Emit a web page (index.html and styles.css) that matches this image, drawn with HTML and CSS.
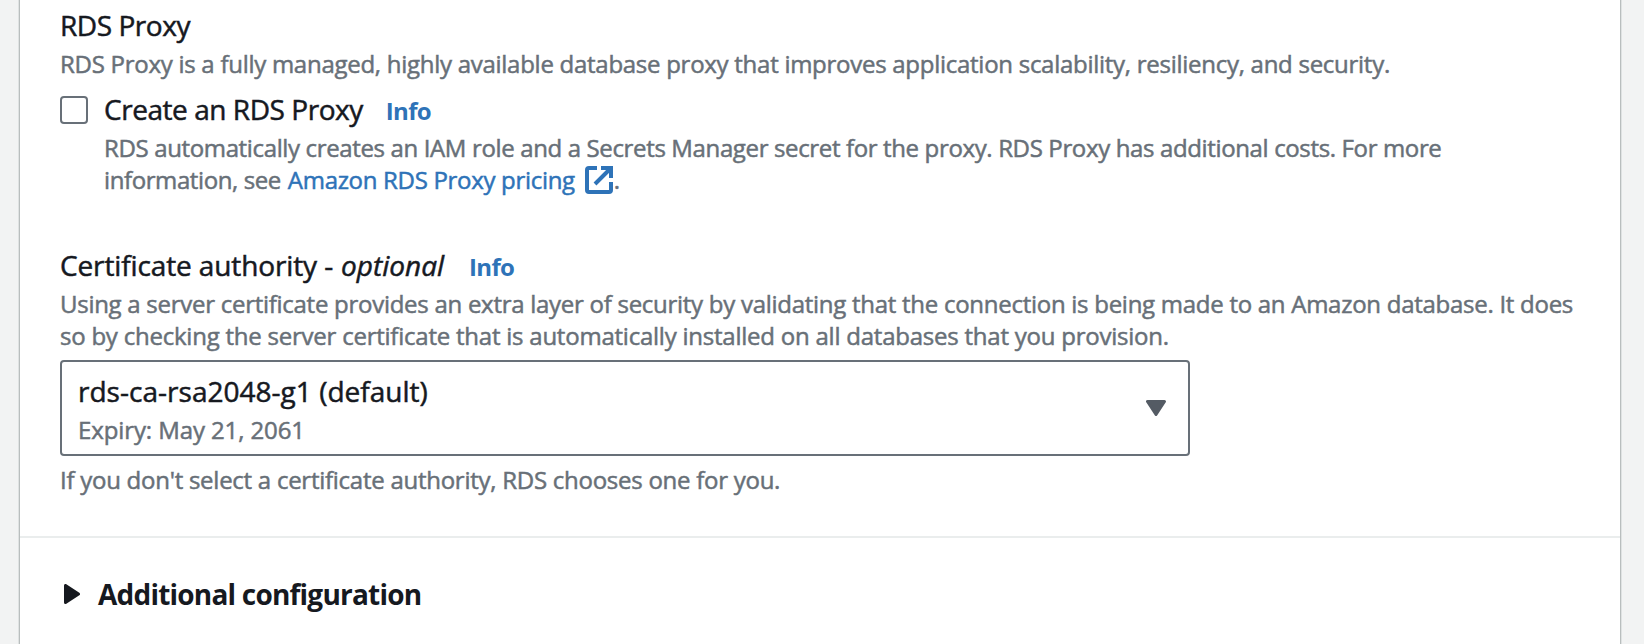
FILE: index.html
```
<!DOCTYPE html>
<html lang="en">
<head>
<meta charset="utf-8">
<title>RDS Proxy</title>
<link rel="stylesheet" href="styles.css">
</head>
<body>
<main class="card">
  <section class="settings">
    <div class="field">
      <h2 class="label label-proxy">RDS Proxy</h2>
      <p class="hint hint-proxy">RDS Proxy is a fully managed, highly available database proxy that improves application scalability, resiliency, and security.</p>
      <div class="check-row">
        <span class="checkbox" role="checkbox" aria-checked="false"></span>
        <div class="check-body">
          <div class="label-row"><span class="label label-create">Create an RDS Proxy</span><a class="info">Info</a></div>
          <p class="hint hint-role">RDS automatically creates an IAM role and a Secrets Manager secret for the proxy. RDS Proxy has additional costs. For more</p>
          <p class="hint hint-link"><span class="hint-see">information, see</span><a class="link">Amazon RDS Proxy pricing</a><svg class="external" viewBox="0 0 28 28" width="28" height="28"><path d="M12 2H4Q2 2 2 4V24Q2 26 4 26H24Q26 26 26 24V16M16 2H26V12M25 3L10 18" fill="none" stroke="currentColor" stroke-width="4"/></svg><span>.</span></p>
        </div>
      </div>
    </div>
    <div class="field field-ca">
      <div class="label-row"><h2 class="label label-ca">Certificate authority -</h2><em class="label optional">optional</em><a class="info info-ca">Info</a></div>
      <p class="hint hint-using">Using a server certificate provides an extra layer of security by validating that the connection is being made to an Amazon database. It does</p>
      <p class="hint hint-so">so by checking the server certificate that is automatically installed on all databases that you provision.</p>
      <div class="select">
        <div class="select-text">
          <div class="label option">rds-ca-rsa2048-g1 (default)</div>
          <div class="hint expiry">Expiry: May 21, 2061</div>
        </div>
        <svg class="caret" viewBox="0 0 20 16" width="20" height="16"><path d="M1.5 1.5H18.5L10 14.5Z" fill="currentColor" stroke="currentColor" stroke-width="3" stroke-linejoin="round"/></svg>
      </div>
      <p class="hint hint-none">If you don't select a certificate authority, RDS chooses one for you.</p>
    </div>
  </section>
  <section class="expander">
    <svg viewBox="0 0 16 20" width="16" height="20"><path d="M1.5 1.5V18.5L14.5 10Z" fill="currentColor" stroke="currentColor" stroke-width="3" stroke-linejoin="round"/></svg>
    <h2 class="label expander-title">Additional configuration</h2>
  </section>
</main>
</body>
</html>
```
FILE: styles.css
```
* { box-sizing: border-box; }
body {
  margin: 0;
  height: 644px;
  overflow: hidden;
  padding: 0 24px 0 20px;
  background: #f2f3f3;
  font-family: "Open Sans", "Noto Sans", sans-serif;
  font-weight: 500;
  color: #16191f;
}
h2, p { margin: 0; }
.card {
  height: 644px;
  background: #fff;
  box-shadow: 0 0 0 1px #b9bebe, 0 0 0 2px #dfe2e2;
}
.settings {
  height: 538px;
  padding: 3px 40px 0;
  border-bottom: 2px solid #eaeded;
}
.label {
  font-size: 28px;
  line-height: 44px;
  font-weight: 500;
  white-space: nowrap;
  -webkit-text-stroke: 0.5px currentColor;
}
.label-row { display: flex; height: 44px; }
.hint {
  font-size: 24px;
  line-height: 32px;
  color: #687078;
  white-space: nowrap;
  -webkit-text-stroke: 0.5px currentColor;
}
.label + .hint, .label-row + .hint { margin-top: 1px; }
.check-row { display: flex; gap: 16px; margin-top: 7px; }
.checkbox {
  width: 28px;
  height: 28px;
  margin-top: 9px;
  border: 2px solid #687078;
  border-radius: 4px;
}
.info {
  margin-left: 23px;
  padding-top: 3px;
  font-size: 24px;
  line-height: 42px;
  font-weight: 700;
  color: #2e73b8;
  letter-spacing: -0.7px;
}
.info-ca { margin-left: 25px; }
.hint-link { display: flex; }
.link {
  margin-left: 7px;
  color: #2e73b8;
  letter-spacing: -0.31px;
  -webkit-text-stroke: 0.5px #2e73b8;
}
.external { margin: 2px 1px 0 10px; color: #2e73b8; }
.field-ca { margin-top: 47px; }
.optional { margin-left: 8px; font-style: italic; }
.select {
  display: flex;
  align-items: center;
  justify-content: space-between;
  width: 1130px;
  height: 96px;
  margin: 8px 0;
  padding: 0 22px 0 16px;
  border: 2px solid #687078;
  border-radius: 4px;
}
.select-text { padding-bottom: 1px; }
.caret { color: #545b64; }
.expander {
  display: flex;
  align-items: center;
  gap: 18px;
  padding: 34px 44px 0;
}
.expander-title {
  font-weight: 700;
  letter-spacing: -0.79px;
  -webkit-text-stroke: 0;
}

/* Tracking per line */
.label-proxy { letter-spacing: -0.45px; }
.hint-proxy { letter-spacing: -0.27px; }
.label-create { letter-spacing: -0.45px; }
.hint-role { letter-spacing: -0.36px; }
.hint-see { letter-spacing: -0.4px; }
.label-ca { letter-spacing: -0.12px; }
.option { letter-spacing: 0.02px; }
.hint-using { letter-spacing: -0.272px; }
.hint-so { letter-spacing: -0.23px; }
.expiry { letter-spacing: -0.1px; }
.hint-none { letter-spacing: -0.26px; }
```
